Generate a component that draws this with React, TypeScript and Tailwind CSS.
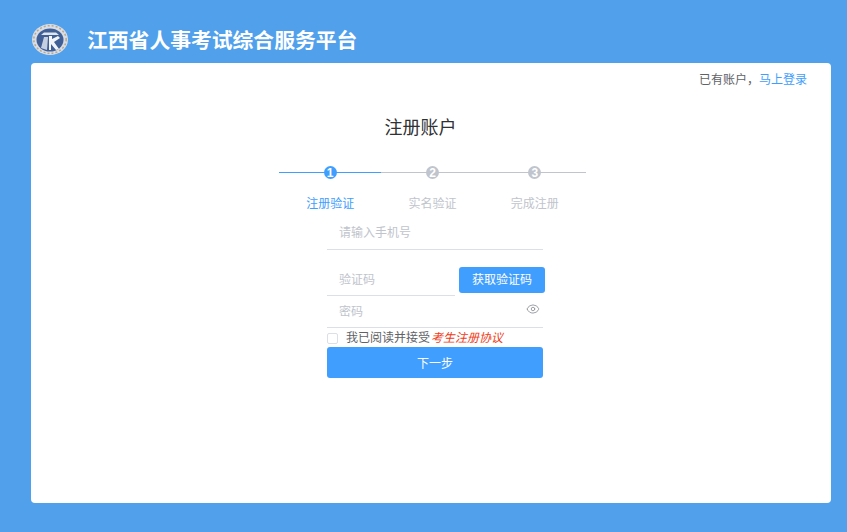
import { Eye } from "lucide-react";

const steps = [
  { num: 1, label: "注册验证", active: true },
  { num: 2, label: "实名验证", active: false },
  { num: 3, label: "完成注册", active: false },
];

function Logo() {
  return (
    <svg width="36" height="31" viewBox="0 0 36 31" className="shrink-0">
      <ellipse cx="18" cy="15.5" rx="18" ry="15.5" fill="#d8dde6" />
      <ellipse cx="18" cy="15.5" rx="16.2" ry="13.8" fill="none" stroke="#b9a98a" strokeWidth="1.5" strokeDasharray="2 2" />
      <ellipse cx="18" cy="16" rx="13.5" ry="11.5" fill="#3f5f96" />
      <path d="M12 8.5h12l3 2.5H9z" fill="#dfe5ee" />
      <path d="M9 24l3-11h4l-1 13z" fill="#c4cfe0" />
      <path d="M17 12h3v3l6-3 2 2-6 4 5 7-3 1-5-6v6h-2z" fill="#f2f4f8" />
    </svg>
  );
}

export default function App() {
  return (
    <div className="w-[847px] h-[532px] bg-[#50a0ec] overflow-hidden font-['Liberation_Sans','Noto_Sans_CJK_SC',sans-serif]">
      <header className="h-[63px] pl-8 pt-6 flex items-start">
        <Logo />
        <h1 className="ml-[19px] text-[20.8px] leading-[33px] font-bold text-white">江西省人事考试综合服务平台</h1>
      </header>

      <main className="ml-[31px] w-[800px] h-[440px] bg-white rounded-[4px]">
        <div className="h-[33px] pr-6 flex justify-end items-center text-xs text-[#606266]">
          已有账户，<span className="text-[#409eff]">马上登录</span>
        </div>

        <h2 className="mt-[20px] pr-[21px] text-center text-lg leading-6 text-[#303133]">注册账户</h2>

        <div className="mt-[26px] ml-[248px] w-[307px] flex">
          {steps.map((step) => (
            <div key={step.num} className="flex-1 flex flex-col items-center">
              <div className="relative w-full h-[13px] flex justify-center items-center">
                <div className={`absolute left-0 right-0 top-[6px] h-px ${step.active ? "bg-[#409eff]" : "bg-[#c0c4cc]"}`} />
                <span className={`relative w-[13px] h-[13px] rounded-full flex items-center justify-center text-xs leading-none font-bold text-white ${step.active ? "bg-[#409eff]" : "bg-[#c0c4cc]"}`}>
                  {step.num}
                </span>
              </div>
              <div className={`mt-[16px] text-xs leading-[18px] ${step.active ? "text-[#409eff]" : "text-[#c0c4cc]"}`}>{step.label}</div>
            </div>
          ))}
        </div>

        <form className="ml-[296px] mt-[6px] w-[218px] text-xs">
          <div className="w-[216px] h-[31px] pl-3 pt-[5px] leading-[18px] border-b border-[#dcdfe6] text-[#c0c4cc]">请输入手机号</div>

          <div className="mt-[16px] flex items-start">
            <div className="w-[128px] h-[30px] pl-3 pt-[5px] leading-[18px] border-b border-[#dcdfe6] text-[#c0c4cc]">验证码</div>
            <button type="button" className="ml-1 mt-px w-[86px] h-[26px] bg-[#409eff] rounded-[3px] text-white text-xs">获取验证码</button>
          </div>

          <div className="relative w-[216px] h-[32px] pl-3 pt-[7px] leading-[18px] border-b border-[#dcdfe6] text-[#c0c4cc]">
            密码
            <Eye className="absolute right-[3px] top-[6px] w-[14px] h-[14px] text-[#909399]" strokeWidth={1.5} />
          </div>

          <div className="mt-[4px] h-[12px] flex items-center text-[#606266]">
            <span className="w-[11px] h-[11px] border border-[#dcdfe6] rounded-[2px]" />
            <span className="ml-2 leading-[18px]">我已阅读并接受</span>
            <span className="ml-px italic text-[#f03a17] leading-[18px]">考生注册协议</span>
          </div>

          <button type="button" className="mt-[3px] pt-[3px] w-[216px] h-[31px] bg-[#409eff] rounded-[3px] text-white text-xs">下一步</button>
        </form>
      </main>
    </div>
  );
}
